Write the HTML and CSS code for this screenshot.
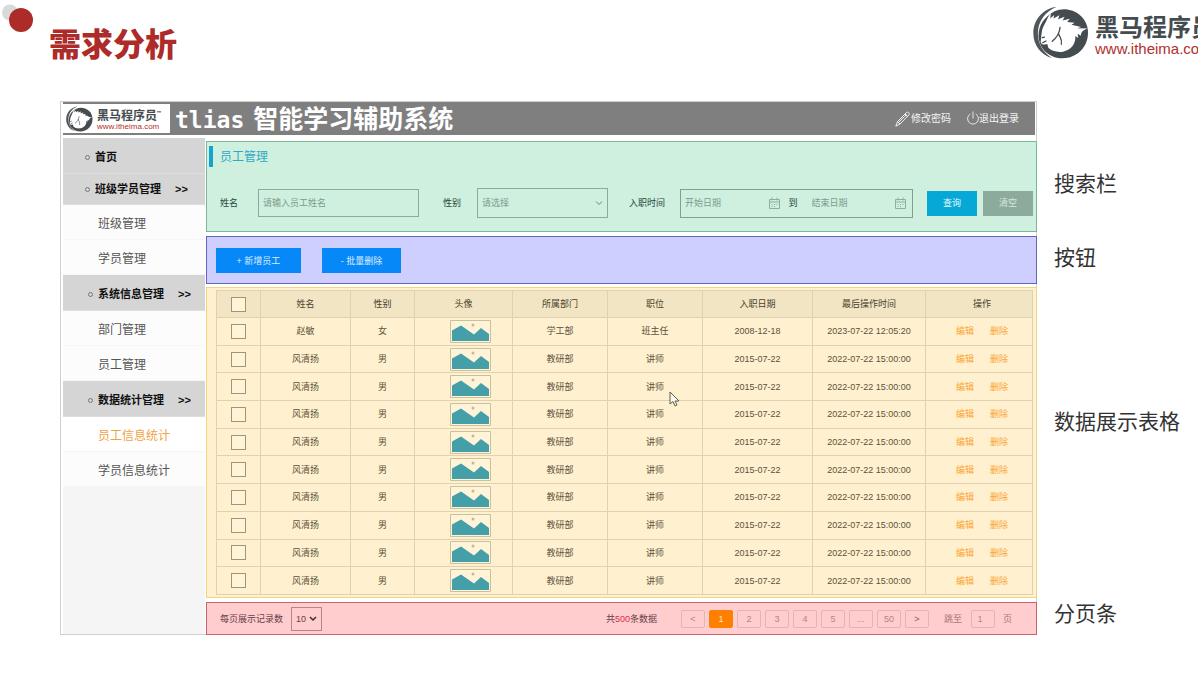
FILE: index.html
```html
<!DOCTYPE html>
<html lang="zh-CN">
<head>
<meta charset="utf-8">
<meta name="viewport" content="width=device-width, initial-scale=1">
<title>需求分析</title>
<link rel="stylesheet" href="styles.css">
</head>
<body>
<svg class="symbols" aria-hidden="true">
  <symbol id="horse" viewBox="40 15 172 162">
    <path fill="#505759" d="M113 17C70 22 41 58 41 98c0 38 25 68 58 76-27-15-44-43-44-75 0-37 23-68 58-82z"/>
    <path fill="#454c4f" d="M106 31c42-20 102 8 103 65 0 47-36 79-78 79-40 0-72-28-74-67-1-32 17-60 49-77z"/>
    <path fill="#fff" d="M95 36L93 53 105 42 103 53 121 43 117 55 137 48 131 59 153 54 145 64 168 66 158 72 188 79 176 83 208 84C194 88 187 95 187 106L177 100 179 113 170 107C172 130 158 150 132 155 114 158 96 152 87 143L84 131 77 133C69 134 62 129 64 121 67 98 66 86 76 70 82 60 85 47 95 36z"/>
    <path fill="none" stroke="#454c4f" stroke-width="4" stroke-linecap="round" d="M123 80c-1 17-8 30-24 43M118 99c3 11 13 17 9 33M69 112l6-2M70 127l10-5"/>
  </symbol>
  <symbol id="calendar" viewBox="0 0 13 12">
    <path fill="none" stroke="#8fae9f" d="M1.500 2.500h10v9h-10zM1.500 5h10M4 .5v3M9 .5v3M3.500 7.500h1M6 7.500h1M8.500 7.500h1M3.500 9.500h1M6 9.500h1"/>
  </symbol>
  <symbol id="picture" viewBox="0 0 41 23">
    <path fill="#fff3d8" stroke="#c9c09c" d="M.5.500h40v22H.5z"/>
    <path fill="#449fa8" d="M2 10.500l9-5 13 9 7-6.500 8 6v7H2z"/>
    <circle cx="23" cy="5" r="1.500" fill="#c8b894"/>
  </symbol>
</svg>

<header class="slide-head">
  <svg class="dots" viewBox="0 0 36 36" aria-hidden="true"><circle cx="10" cy="12.500" r="8" fill="#d9d9d9"/><circle cx="21" cy="20" r="12" fill="#ad2b29"/></svg>
  <h1>需求分析</h1>
  <div class="brand">
    <svg class="brand-mark" aria-hidden="true"><use href="#horse"/></svg>
    <div class="brand-text"><strong>黑马程序员</strong><span>www.itheima.com</span></div>
  </div>
</header>

<main class="board">
  <div class="frame" aria-hidden="true"></div>

  <div class="topbar">
    <div class="small-brand">
      <svg class="small-mark" aria-hidden="true"><use href="#horse"/></svg>
      <div class="small-text"><strong>黑马程序员<sup>™</sup></strong><span>www.itheima.com</span></div>
    </div>
    <h2><span class="latin">tlias</span><span>智能学习辅助系统</span></h2>
    <a class="tool" href="#"><svg width="15" height="16" viewBox="0 0 15 16" fill="none" stroke="#f2f2f2" aria-hidden="true"><path d="M.8 15.200l1.700-4.700L11.500 1.500q1-1 2.200.2t.2 2.200L5 13zM10 3l3 3M2.500 10.500L5 13M3.500 11.500l8-8"/></svg>修改密码</a>
    <a class="tool" href="#"><svg width="12" height="16" viewBox="0 0 12 16" fill="none" stroke="#e6e6e6" aria-hidden="true"><path d="M6 .5v7M3.300 3a5.400 5.400 0 1 0 5.400 0"/></svg>退出登录</a>
  </div>

  <nav class="sidebar">
    <a class="group" href="#"><i></i>首页</a>
    <a class="group short" href="#"><i></i>班级学员管理<b>&gt;&gt;</b></a>
    <a href="#">班级管理</a>
    <a href="#">学员管理</a>
    <a class="group inset" href="#"><i></i>系统信息管理<b>&gt;&gt;</b></a>
    <a href="#">部门管理</a>
    <a href="#">员工管理</a>
    <a class="group inset" href="#"><i></i>数据统计管理<b>&gt;&gt;</b></a>
    <a class="current" href="#">员工信息统计</a>
    <a href="#">学员信息统计</a>
  </nav>

  <section class="panel search">
    <h3>员工管理</h3>
    <form class="filters">
      <div class="field name"><label for="name">姓名</label><input id="name" type="text" placeholder="请输入员工姓名"></div>
      <div class="field sex"><label for="sex">性别</label><select id="sex"><option>请选择</option><option>男</option><option>女</option></select></div>
      <div class="field dates"><label for="from">入职时间</label>
        <div class="range">
          <input id="from" type="text" placeholder="开始日期"><svg width="13" height="12" aria-hidden="true"><use href="#calendar"/></svg>
          <label for="to">到</label>
          <input id="to" type="text" placeholder="结束日期"><svg width="13" height="12" aria-hidden="true"><use href="#calendar"/></svg>
        </div>
      </div>
      <button class="query" type="button">查询</button>
      <button class="clear" type="reset">清空</button>
    </form>
  </section>
  <p class="note search-note">搜索栏</p>

  <section class="panel actions">
    <button class="add" type="button">+ 新增员工</button>
    <button class="remove" type="button">- 批量删除</button>
  </section>
  <p class="note actions-note">按钮</p>

  <section class="panel data">
    <table>
      <colgroup><col class="c-check"><col class="c-name"><col class="c-sex"><col class="c-photo"><col class="c-dept"><col class="c-job"><col class="c-date"><col class="c-time"><col class="c-ops"></colgroup>
      <thead><tr><th><input type="checkbox" aria-label="全选"></th><th>姓名</th><th>性别</th><th>头像</th><th>所属部门</th><th>职位</th><th>入职日期</th><th>最后操作时间</th><th class="ops">操作</th></tr></thead>
      <tbody>
        <tr><td><input type="checkbox" aria-label="选择"></td><td>赵敏</td><td>女</td><td class="pic"><svg class="photo"><use href="#picture"/></svg></td><td>学工部</td><td>班主任</td><td>2008-12-18</td><td>2023-07-22 12:05:20</td><td class="ops"><a href="#">编辑</a><a href="#">删除</a></td></tr>
        <tr><td><input type="checkbox" aria-label="选择"></td><td>风清扬</td><td>男</td><td class="pic"><svg class="photo"><use href="#picture"/></svg></td><td>教研部</td><td>讲师</td><td>2015-07-22</td><td>2022-07-22 15:00:00</td><td class="ops"><a href="#">编辑</a><a href="#">删除</a></td></tr>
        <tr><td><input type="checkbox" aria-label="选择"></td><td>风清扬</td><td>男</td><td class="pic"><svg class="photo"><use href="#picture"/></svg></td><td>教研部</td><td>讲师</td><td>2015-07-22</td><td>2022-07-22 15:00:00</td><td class="ops"><a href="#">编辑</a><a href="#">删除</a></td></tr>
        <tr><td><input type="checkbox" aria-label="选择"></td><td>风清扬</td><td>男</td><td class="pic"><svg class="photo"><use href="#picture"/></svg></td><td>教研部</td><td>讲师</td><td>2015-07-22</td><td>2022-07-22 15:00:00</td><td class="ops"><a href="#">编辑</a><a href="#">删除</a></td></tr>
        <tr><td><input type="checkbox" aria-label="选择"></td><td>风清扬</td><td>男</td><td class="pic"><svg class="photo"><use href="#picture"/></svg></td><td>教研部</td><td>讲师</td><td>2015-07-22</td><td>2022-07-22 15:00:00</td><td class="ops"><a href="#">编辑</a><a href="#">删除</a></td></tr>
        <tr><td><input type="checkbox" aria-label="选择"></td><td>风清扬</td><td>男</td><td class="pic"><svg class="photo"><use href="#picture"/></svg></td><td>教研部</td><td>讲师</td><td>2015-07-22</td><td>2022-07-22 15:00:00</td><td class="ops"><a href="#">编辑</a><a href="#">删除</a></td></tr>
        <tr><td><input type="checkbox" aria-label="选择"></td><td>风清扬</td><td>男</td><td class="pic"><svg class="photo"><use href="#picture"/></svg></td><td>教研部</td><td>讲师</td><td>2015-07-22</td><td>2022-07-22 15:00:00</td><td class="ops"><a href="#">编辑</a><a href="#">删除</a></td></tr>
        <tr><td><input type="checkbox" aria-label="选择"></td><td>风清扬</td><td>男</td><td class="pic"><svg class="photo"><use href="#picture"/></svg></td><td>教研部</td><td>讲师</td><td>2015-07-22</td><td>2022-07-22 15:00:00</td><td class="ops"><a href="#">编辑</a><a href="#">删除</a></td></tr>
        <tr><td><input type="checkbox" aria-label="选择"></td><td>风清扬</td><td>男</td><td class="pic"><svg class="photo"><use href="#picture"/></svg></td><td>教研部</td><td>讲师</td><td>2015-07-22</td><td>2022-07-22 15:00:00</td><td class="ops"><a href="#">编辑</a><a href="#">删除</a></td></tr>
        <tr><td><input type="checkbox" aria-label="选择"></td><td>风清扬</td><td>男</td><td class="pic"><svg class="photo"><use href="#picture"/></svg></td><td>教研部</td><td>讲师</td><td>2015-07-22</td><td>2022-07-22 15:00:00</td><td class="ops"><a href="#">编辑</a><a href="#">删除</a></td></tr>
      </tbody>
    </table>
    <svg class="cursor" width="11" height="16" viewBox="0 0 11 16" aria-hidden="true"><path fill="#fffaf0" stroke="#5f5a50" d="M1 1v12l3-2.500L6 15l2-1-2-4h4z"/></svg>
  </section>
  <p class="note data-note">数据展示表格</p>

  <section class="panel pager">
    <label for="size">每页展示记录数</label>
    <select id="size"><option>10</option><option>20</option></select>
    <p class="total">共<em>500</em>条数据</p>
    <div class="pages">
      <button type="button">&lt;</button><button class="active" type="button">1</button><button type="button">2</button><button type="button">3</button><button type="button">4</button><button type="button">5</button><button type="button">...</button><button type="button">50</button><button class="next" type="button">&gt;</button>
    </div>
    <label class="jump" for="jump">跳至</label>
    <input id="jump" type="text" value="1">
    <span class="unit">页</span>
  </section>
  <p class="note pager-note">分页条</p>
</main>
</body>
</html>
```
FILE: styles.css
```css
* { box-sizing: border-box; }
body {
  margin: 0;
  overflow-x: hidden;
  background: #fff;
  color: #333;
  font: 9px/12px "Liberation Sans", "Noto Sans CJK SC", sans-serif;
}
h1, h2, h3, p { margin: 0; }
a { text-decoration: none; }
input, select, button { font: inherit; color: inherit; margin: 0; border-radius: 0; }
.symbols { position: absolute; width: 0; height: 0; }

.slide-head { display: flex; align-items: flex-start; height: 101px; }
.dots { width: 36px; height: 36px; flex: none; }
.slide-head h1 {
  margin: 19px 0 0 13px;
  color: #ad2b29;
  font: 900 32px/46px "Noto Sans CJK SC", sans-serif;
}
.brand { display: flex; gap: 6px; width: 165px; margin-left: auto; padding-top: 6px; overflow: hidden; }
.brand-mark { width: 56px; height: 53px; flex: none; }
.brand-text { flex: none; padding-top: 5px; }
.brand-text strong { display: block; color: #454c4f; font: 700 24px/29px "Noto Sans CJK SC", sans-serif; }
.brand-text span { display: block; color: #b0302e; font-size: 15px; line-height: 17px; }

.board {
  display: grid;
  grid-template-columns: 146px minmax(0, 1fr) 161px;
  grid-template-rows: repeat(5, auto);
  margin-left: 60px;
}
.frame { grid-area: 1 / 1 / 6 / 3; border: 1px solid #cfcfcf; }

.topbar {
  grid-area: 1 / 1 / 2 / 3;
  display: flex;
  align-items: center;
  height: 33px;
  margin: 1px 2px 0 3px;
  padding: 2px 16px 2px 0;
  background: #7f7f7f;
}
.small-brand { display: flex; align-items: center; gap: 4px; width: 107px; height: 29px; padding-left: 3px; background: #fff; flex: none; }
.small-mark { width: 27px; height: 26px; flex: none; }
.small-text strong { display: block; color: #454c4f; font: 700 12px/15px "Noto Sans CJK SC", sans-serif; white-space: nowrap; }
.small-text sup { font-size: 5px; line-height: 5px; vertical-align: 5px; }
.small-text span { display: block; color: #b0302e; font-size: 8px; line-height: 9px; }
.topbar h2 {
  display: flex;
  gap: 9px;
  align-items: baseline;
  margin: 0 auto 0 5px;
  color: #fff;
  font: 700 25px/28px KaiTi, "Noto Sans CJK SC", sans-serif;
  white-space: nowrap;
}
.topbar .latin { font: 700 23px/28px "DejaVu Sans Mono", monospace; }
.tool { display: flex; align-items: center; gap: 1px; color: #f5f5f5; font-size: 10px; }
.tool + .tool { gap: 0; margin-left: 16px; }

.sidebar {
  grid-area: 2 / 1 / 6 / 2;
  display: flex;
  flex-direction: column;
  margin: 3px 1px 1px 3px;
  background: #f5f5f5;
}
.sidebar a {
  display: flex;
  align-items: center;
  height: 35px;
  padding: 3px 0 0 35px;
  border-bottom: 1px solid #f6f6f6;
  background: #fcfcfc;
  color: #555;
  font-size: 12px;
}
.sidebar .group {
  height: 36px;
  padding-left: 22px;
  border-bottom-color: #dedede;
  background: #d5d5d5;
  color: #111;
  font-size: 11px;
  font-weight: 700;
}
.sidebar .short { height: 31px; padding-top: 0; }
.sidebar .inset { padding-left: 25px; }
.sidebar i { width: 5px; height: 5px; margin-right: 5px; border: 1px solid #777; border-radius: 50%; }
.sidebar b { margin-left: 14px; }
.sidebar .current { background: #fff; color: #f2a143; }

.panel { grid-column: 2; border: 1px solid; }
.note {
  grid-column: 3;
  align-self: center;
  padding-left: 17px;
  color: #333;
  font-size: 21px;
  line-height: 28px;
  white-space: nowrap;
}

.search { grid-row: 2; margin-top: 6px; padding: 4px 3px 13px 2px; border-color: #78b898; background: #cfefdf; }
.search h3 { border-left: 4px solid #14a5cf; padding: 2px 0 0 7px; color: #30a9c4; font-size: 12px; font-weight: 400; line-height: 19px; }
.filters { display: flex; align-items: center; margin-top: 21px; padding-left: 11px; height: 30px; }
.field { display: flex; align-items: center; min-width: 0; color: #24463a; }
.field > label { flex: none; }
.name { flex: 199 1 0; gap: 20px; margin-right: 24px; }
.sex { flex: 165 1 0; gap: 16px; margin-right: 21px; }
.dates { flex: 284 1 0; gap: 15px; margin-right: 14px; }
.field input, .field select { flex: 1; min-width: 0; height: 28px; border: 1px solid #8eaa9c; background: transparent; color: #7d9b8d; }
.field input { padding: 0 4px; }
.field input::placeholder { color: #7d9b8d; opacity: 1; }
.field select {
  height: 30px;
  padding: 0 4px;
  appearance: none;
  background: url("data:image/svg+xml,%3Csvg xmlns='http://www.w3.org/2000/svg' width='8' height='6' fill='none' stroke='%23668577'%3E%3Cpath d='M1 1.5l3 3 3-3'/%3E%3C/svg%3E") right 4px center no-repeat;
}
.range { display: flex; align-items: center; flex: 1; min-width: 0; height: 29px; padding-right: 5px; border: 1px solid #7fa18f; }
.range input { border: 0; }
.range svg { flex: none; }
.range label { margin: 0 10px 0 8px; }
.filters button { width: 50px; height: 25px; padding: 0; border: 0; color: #e4f8fb; }
.query { background: #06a9d6; }
.filters .clear { margin-left: 6px; background: #8dab9c; color: #d2e8dc; }

.actions { grid-row: 3; display: flex; align-items: center; gap: 21px; margin-top: 4px; padding: 11px 9px 10px; border-color: #6464bd; background: #cfcfff; }
.actions button { height: 25px; padding: 0; border: 0; background: #0788f9; color: #d9edff; }
.actions .add { width: 85px; }
.actions .remove { width: 79px; }

.data { grid-row: 4; position: relative; margin-top: 3px; padding: 2px 4px 2px 9px; border-color: #f0d684; background: #fff0cf; }
.data table { width: 100%; height: 305px; table-layout: fixed; border-collapse: collapse; }
.data th, .data td { padding: 0; border: 1px solid #e0d2b0; text-align: center; font-weight: 400; color: #5c523b; line-height: 12px; }
.data th { height: 27px; background: #f2e5c4; color: #4a412d; }
.c-check { width: 44px; }
.c-name { width: 90px; }
.c-sex { width: 64px; }
.c-photo { width: 98px; }
.c-dept, .c-job { width: 95px; }
.c-date { width: 110px; }
.c-time { width: 113px; }
.c-ops { width: 107px; }
.data input { display: block; width: 15px; height: 15px; margin: 0 auto; appearance: none; border: 1px solid #a09674; background: #fff3d8; }
.data .pic { padding-left: 14px; }
.data .ops { padding-left: 6px; }
.photo { display: block; width: 41px; height: 23px; margin: 0 auto; }
.data a { color: #fba536; }
.data a + a { margin-left: 16px; }
.cursor { position: absolute; left: 462px; top: 103px; }

.pager { grid-row: 5; display: flex; align-items: center; height: 33px; margin-top: 4px; padding: 0 24px 0 13px; border-color: #c8636b; background: #ffcdcd; color: #67404a; }
.pager select {
  width: 31px;
  height: 24px;
  margin-left: 8px;
  padding: 0 12px 0 4px;
  border: 1px solid #b5858a;
  appearance: none;
  background: url("data:image/svg+xml,%3Csvg xmlns='http://www.w3.org/2000/svg' width='8' height='6' fill='none' stroke='%23402a30' stroke-width='1.5'%3E%3Cpath d='M1 1l3 3 3-3'/%3E%3C/svg%3E") right 4px center no-repeat;
}
.total { margin-left: auto; }
.total em { color: #d82e4c; font-style: normal; }
.pages { display: flex; gap: 4px; margin-left: 24px; }
.pages button, .pager input { width: 24px; height: 18px; padding: 0; border: 1px solid #e5b3b6; border-radius: 2px; background: transparent; color: #b0858b; text-align: center; }
.pages .active { border-color: #ff7f00; background: #ff7f00; color: #ffe3cb; }
.pages .next { color: #805d63; }
.jump { margin-left: 15px; color: #a6777d; }
.pager input { margin: 0 8px 0 9px; padding-right: 6px; }
.unit { color: #a6777d; }

.search-note { grid-row: 2; }
.actions-note { grid-row: 3; }
.data-note { grid-row: 4; padding-bottom: 38px; }
.pager-note { grid-row: 5; padding-bottom: 6px; }
```
